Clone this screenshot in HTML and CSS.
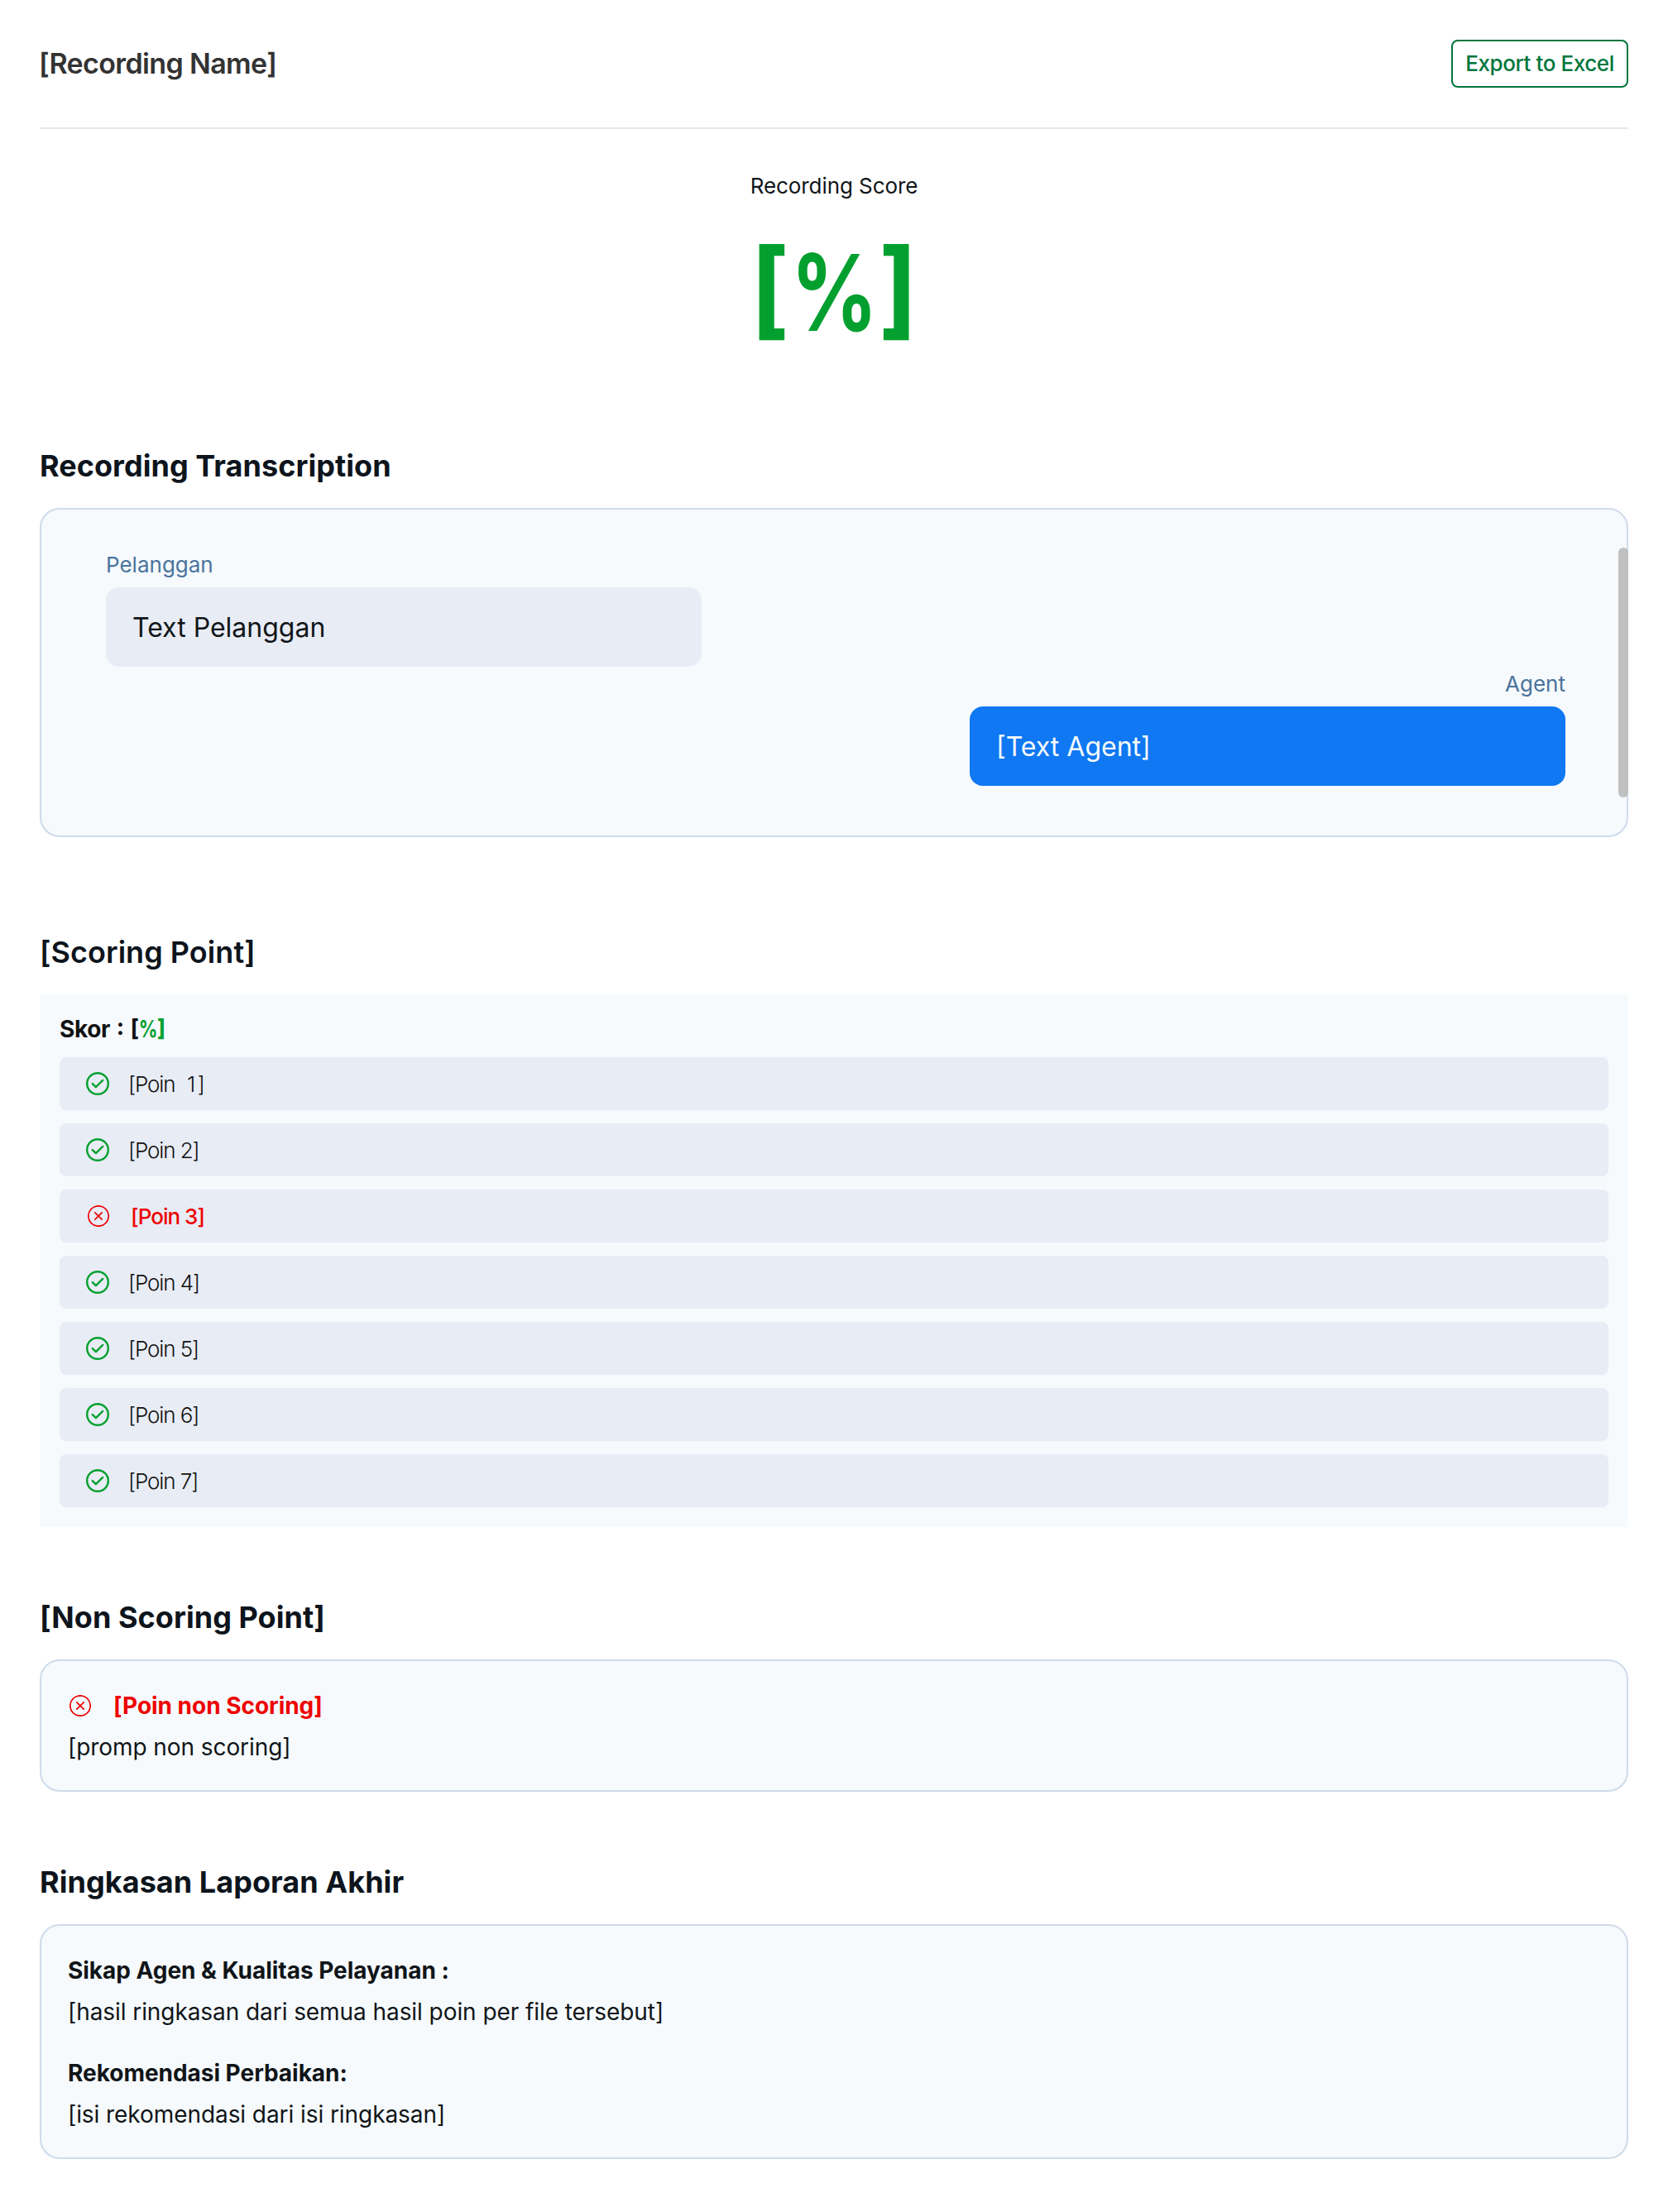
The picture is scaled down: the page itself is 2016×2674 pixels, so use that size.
FILE: index.html
```html
<!DOCTYPE html>
<html lang="id">
<head>
<meta charset="utf-8">
<title>Recording Report</title>
<link rel="stylesheet" href="styles.css">
</head>
<body>
<svg width="0" height="0" class="defs">
  <symbol id="check" viewBox="0 0 28 28"><circle cx="14" cy="14" r="12.8"/><path d="M7.8 14.1 L11.9 18.1 L20.2 9.9"/></symbol>
  <symbol id="cross" viewBox="0 0 26 26"><circle cx="13" cy="13" r="12.2"/><path d="M8.8 8.8 L17.2 17.2 M17.2 8.8 L8.8 17.2"/></symbol>
</svg>
<main class="page">
  <header class="header">
    <h1 class="title">[Recording Name]</h1>
    <button class="export">Export to Excel</button>
  </header>

  <section class="score">
    <p class="score-label">Recording Score</p>
    <p class="score-value"><span>[</span><span class="percent">%</span><span>]</span></p>
  </section>

  <section class="section">
    <h2 class="heading">Recording Transcription</h2>
    <div class="card transcript">
      <div class="message">
        <span class="speaker">Pelanggan</span>
        <div class="bubble">Text Pelanggan</div>
      </div>
      <div class="message agent">
        <span class="speaker">Agent</span>
        <div class="bubble">[Text Agent]</div>
      </div>
      <div class="scrollbar"></div>
    </div>
  </section>

  <section class="section section-scoring">
    <h2 class="heading medium">[Scoring Point]</h2>
    <div class="points">
      <p class="skor">Skor : [<span class="green"><span class="skor-percent">%</span>]</span></p>
      <div class="point"><svg class="icon"><use href="#check"/></svg><span class="wide">[Poin  <span class="digit">1</span>]</span></div>
      <div class="point"><svg class="icon"><use href="#check"/></svg><span>[Poin 2]</span></div>
      <div class="point failed"><svg class="icon-cross"><use href="#cross"/></svg><span>[Poin 3]</span></div>
      <div class="point"><svg class="icon"><use href="#check"/></svg><span>[Poin 4]</span></div>
      <div class="point"><svg class="icon"><use href="#check"/></svg><span>[Poin 5]</span></div>
      <div class="point"><svg class="icon"><use href="#check"/></svg><span>[Poin 6]</span></div>
      <div class="point"><svg class="icon"><use href="#check"/></svg><span>[Poin 7]</span></div>
    </div>
  </section>

  <section class="section">
    <h2 class="heading">[Non Scoring Point]</h2>
    <div class="card notes">
      <div class="note">
        <h3 class="note-title red"><svg class="icon-cross"><use href="#cross"/></svg>[Poin non Scoring]</h3>
        <p class="note-text">[promp non scoring]</p>
      </div>
    </div>
  </section>

  <section class="section">
    <h2 class="heading">Ringkasan Laporan Akhir</h2>
    <div class="card notes">
      <div class="note">
        <h3 class="note-title">Sikap Agen &amp; Kualitas Pelayanan :</h3>
        <p class="note-text">[hasil ringkasan dari semua hasil poin per file tersebut]</p>
      </div>
      <div class="note">
        <h3 class="note-title">Rekomendasi Perbaikan:</h3>
        <p class="note-text">[isi rekomendasi dari isi ringkasan]</p>
      </div>
    </div>
  </section>
</main>
</body>
</html>
```
FILE: styles.css
```css
* { box-sizing: border-box; margin: 0; padding: 0; }
body { background: #fff; color: #101518; font-family: Inter, sans-serif; }
.defs { position: absolute; }
.page { display: flex; flex-direction: column; min-height: 2674px; padding: 48px; }

.header { display: flex; justify-content: space-between; align-items: center; height: 108px; padding-bottom: 48px; border-bottom: 2px solid #e8e8e8; }
.title { margin-left: -1px; font-size: 34px; font-weight: 600; line-height: 42px; letter-spacing: -0.63px; color: #333; }
.export { width: 214px; height: 58px; border: 2px solid #00763d; border-radius: 8px; background: #fff; color: #00763d; font: 500 26px/32px Inter, sans-serif; letter-spacing: -0.42px; white-space: nowrap; }

.score { display: flex; flex-direction: column; align-items: center; gap: 35px; height: 385px; padding-top: 53px; }
.score-label { font-size: 26px; line-height: 32px; letter-spacing: -0.07px; }
.score-value { display: flex; justify-content: center; font-size: 128px; font-weight: 700; line-height: 156px; color: #04a02f; font-feature-settings: "case"; }
.percent { width: 107px; display: flex; justify-content: center; transform: scaleX(0.81); }

.section { display: flex; flex-direction: column; gap: 29px; margin-bottom: 87px; }
.section:nth-of-type(2) { margin-bottom: 117px; }
.section:last-child { margin-bottom: 0; }
.heading { font-size: 36px; font-weight: 700; line-height: 44px; letter-spacing: 0.05px; color: #0d141c; }
.medium { font-weight: 600; }

.card { background: #f6fafd; border: 2px solid #cedbe9; border-radius: 24px; }
.transcript { position: relative; display: flex; flex-direction: column; gap: 5px; height: 398px; padding: 51px 74px 0 78px; }
.message { display: flex; flex-direction: column; align-items: flex-start; gap: 11px; }
.speaker { font-size: 26px; line-height: 32px; color: #4a739c; }
.bubble { display: flex; align-items: center; width: 720px; height: 96px; padding: 0 32px; border-radius: 16px; background: #e8ecf5; font-size: 32px; }
.agent { align-items: flex-end; }
.agent .bubble { background: #0f78f2; color: #f6fafd; }
.scrollbar { position: absolute; right: -2px; top: 46px; width: 12px; height: 302px; border-radius: 6px; background: #c0c0c0; }

.points { display: flex; flex-direction: column; gap: 16px; padding: 24px; background: #f6fafd; }
.skor { font-size: 28px; font-weight: 700; line-height: 36px; letter-spacing: -0.4px; word-spacing: 1.6px; color: #111; font-feature-settings: "case"; }
.skor-percent { display: inline-block; margin: 0 -3px; transform: scaleX(0.8); }
.green { color: #04a02f; }
.point { display: flex; align-items: center; gap: 23px; height: 64px; padding-left: 32px; border-radius: 8px; background: #e8ecf5; color: #111; font-size: 26px; font-weight: 300; letter-spacing: -1.1px; }
.wide { white-space: pre; word-spacing: 1px; }
.digit { letter-spacing: 2.5px; }
.failed { padding-left: 34px; gap: 26px; color: #ee0202; font-weight: 500; letter-spacing: -1px; }
.icon { width: 28px; height: 28px; fill: none; stroke: #04a02f; stroke-width: 2.4; stroke-linecap: round; stroke-linejoin: round; }
.icon-cross { width: 26px; height: 26px; fill: none; stroke: #ee0202; stroke-width: 1.7; stroke-linecap: round; }

.notes { display: flex; flex-direction: column; gap: 40px; padding: 37px 32px 35px; }
.note { display: flex; flex-direction: column; gap: 16px; }
.note-title { display: flex; align-items: center; gap: 27px; font-size: 28px; font-weight: 700; line-height: 34px; letter-spacing: -0.03px; }
.note-title .icon-cross { margin-left: 2px; margin-top: -1px; }
.red { color: #ee0202; }
.note-text { font-size: 28px; line-height: 34px; letter-spacing: -0.07px; }
```
